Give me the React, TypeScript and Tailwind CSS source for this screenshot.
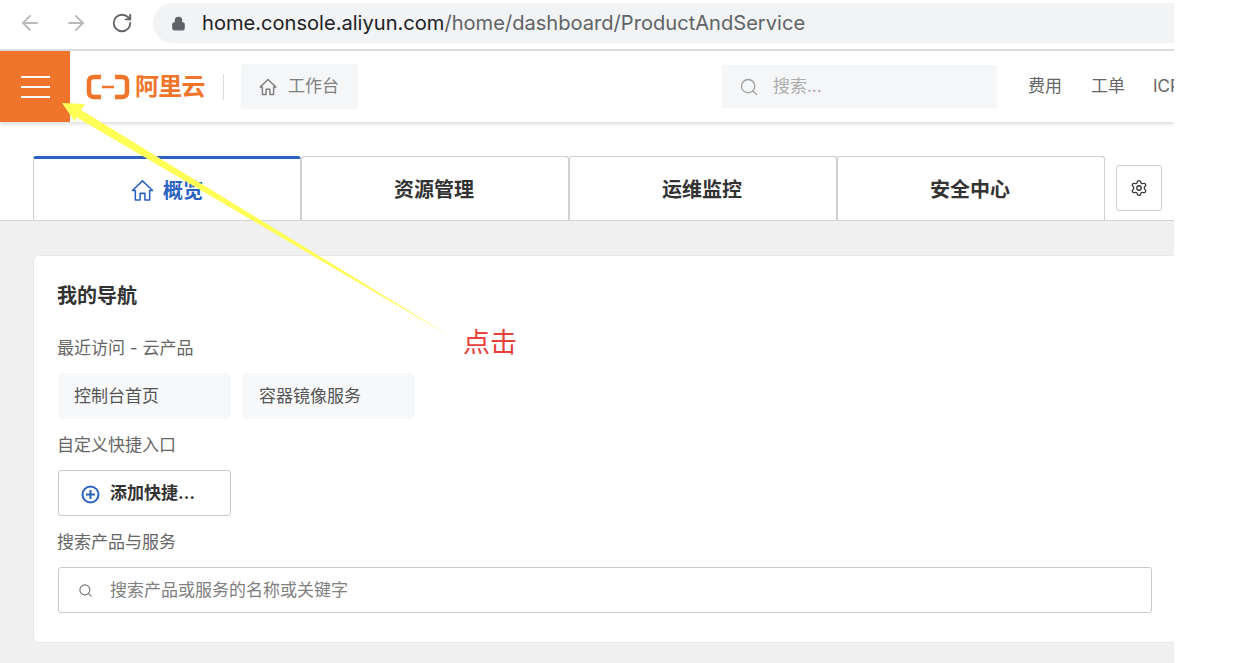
import { ArrowLeft, ArrowRight, RotateCw, Lock, Search, Settings } from 'lucide-react';

const cjk = "font-['Inter','Noto_Sans_CJK_SC',sans-serif]";

function Logo() {
  return (
    <svg className="shrink-0" width="44" height="26" viewBox="0 0 44 26" fill="none" stroke="#f0752b" strokeWidth="4.5">
      <path d="M15 3 H8 Q3 3 3 8 V18 Q3 23 8 23 H15" />
      <path d="M29 3 H36 Q41 3 41 8 V18 Q41 23 36 23 H29" />
      <path d="M16 13 H28" strokeWidth="2.5" />
    </svg>
  );
}

// Outlined house with eaves and a door, as used by the console
function HomeIcon({ size, width = 2 }: { size: number; width?: number }) {
  return (
    <svg className="shrink-0" width={size} height={size} viewBox="0 0 24 24" fill="none" stroke="currentColor" strokeWidth={width} strokeLinejoin="round">
      <path d="M1.5 12 L12 2 L22.5 12 H19.5 V22 H14.5 V15 H9.5 V22 H4.5 V12 Z" />
    </svg>
  );
}

function Arrow() {
  return (
    <svg className="absolute top-0 left-0 z-20 pointer-events-none" width="500" height="350">
      <polygon points="62,103 85,104 81,110 453,338 76,117 75,122" fill="#ffff55" />
    </svg>
  );
}

export default function App() {
  const tabs = ['资源管理', '运维监控', '安全中心'];

  return (
    <div className={`relative w-[1234px] h-[663px] bg-white overflow-hidden ${cjk}`}>
      <div className="w-[1174px] h-[663px] overflow-hidden flex flex-col bg-[#f0f0f0]">
        {/* Browser bar */}
        <div className="h-[51px] shrink-0 bg-white border-b-2 border-[#dadce0] flex items-start pt-[3px]">
          <div className="flex items-center h-10 pl-[18px] gap-[22px]">
            <ArrowLeft size={24} className="text-[#b9bbbd]" strokeWidth={1.8} />
            <ArrowRight size={24} className="text-[#b9bbbd]" strokeWidth={1.8} />
            <RotateCw size={22} className="ml-[1px] text-[#5f6368]" strokeWidth={2} />
          </div>
          <div className="ml-[20px] flex-1 h-10 bg-[#f1f3f4] rounded-l-[20px] flex items-center pl-[18px]">
            <Lock size={15} className="text-[#5f6368]" fill="#5f6368" />
            <span className="ml-[16px] text-[20.1px] text-[#202124] whitespace-nowrap">
              home.console.aliyun.com<span className="text-[#5f6368]">/home/dashboard/ProductAndService</span>
            </span>
          </div>
        </div>

        {/* Console header */}
        <div className="h-[71px] shrink-0 bg-white flex items-center shadow-[0_2px_4px_rgba(0,0,0,0.14)] relative z-10">
          <div className="w-[70px] shrink-0 h-full bg-[#ef742c] flex flex-col items-center justify-center gap-[8px]">
            <div className="w-[29px] h-[2px] bg-white" />
            <div className="w-[29px] h-[2px] bg-white" />
            <div className="w-[29px] h-[2px] bg-white" />
          </div>
          <div className="ml-[16px] shrink-0 flex items-center">
            <Logo />
            <span className="ml-[5px] text-[24px] font-bold text-[#f0752b] leading-none whitespace-nowrap tracking-[-0.7px]">阿里云</span>
          </div>
          <div className="ml-[18px] shrink-0 w-px h-[26px] bg-[#dcdcdc]" />
          <div className="ml-[17px] shrink-0 w-[117px] h-[45px] bg-[#f5f6f8] rounded-[3px] flex items-center pl-[18px] gap-[11px] text-[#808080]">
            <HomeIcon size={18} />
            <span className="text-[17px]">工作台</span>
          </div>
          <div className="ml-[364px] shrink-0 w-[275px] h-[43px] bg-[#f5f6f8] flex items-center pl-[17px] gap-[14px]">
            <Search size={20} className="text-[#a0a0a0]" strokeWidth={1.6} />
            <span className="text-[17px] text-[#adadad]">搜索...</span>
          </div>
          <span className="ml-[31px] shrink-0 text-[17px] text-[#666666] whitespace-nowrap">费用</span>
          <span className="ml-[29px] shrink-0 text-[17px] text-[#666666] whitespace-nowrap">工单</span>
          <span className="ml-[28px] shrink-0 text-[17px] text-[#666666] whitespace-nowrap">ICP</span>
        </div>

        {/* Tabs */}
        <div className="h-[99px] shrink-0 bg-white border-b border-[#d4d4d4] flex items-end pl-[33px]">
          <div className="w-[268px] h-[64px] shrink-0 pt-[2px] bg-white border-x border-[#cfcfd4] border-t-[3px] border-t-[#2b62c0] rounded-t-[3px] flex items-center justify-center gap-[9px] text-[#2b62c0] font-bold text-[20px]">
            <HomeIcon size={23} width={1.6} />
            概览
          </div>
          {tabs.map(tab => (
            <div
              key={tab}
              className="w-[268px] h-[64px] shrink-0 pt-[3px] pr-[2px] bg-white border-x border-t border-[#cfcfd4] rounded-t-[3px] flex items-center justify-center font-bold text-[20px] text-[#333333]"
            >
              {tab}
            </div>
          ))}
          <div className="ml-[11px] mb-[9px] shrink-0 w-[46px] h-[46px] border border-[#d0d0d4] rounded-[3px] flex items-center justify-center text-[#333333]">
            <Settings size={18} strokeWidth={1.7} />
          </div>
        </div>

        {/* My navigation card */}
        <div className="mt-[34px] ml-[33px] w-[1170px] h-[388px] shrink-0 bg-white rounded-[6px] border border-[#e8e8e8] pl-[24px] pt-[26px]">
          <div className="-ml-px text-[20px] font-bold text-[#333333] leading-[28px]">我的导航</div>
          <div className="-ml-px mt-[26px] text-[17px] text-[#666666] leading-[24px]">最近访问 - 云产品</div>
          <div className="mt-[13px] flex gap-[11px]">
            <div className="w-[173px] h-[46px] pt-[2px] bg-[#f7f8fa] rounded-[3px] flex items-center pl-[16px] text-[17px] text-[#555555]">控制台首页</div>
            <div className="w-[173px] h-[46px] pt-[2px] bg-[#f7f8fa] rounded-[3px] flex items-center pl-[17px] text-[17px] text-[#555555]">容器镜像服务</div>
          </div>
          <div className="-ml-px mt-[14px] text-[17px] text-[#666666] leading-[24px]">自定义快捷入口</div>
          <div className="mt-[13px] w-[173px] h-[46px] pt-[2px] border border-[#c9c9cd] rounded-[3px] flex items-center pl-[22px] gap-[10px]">
            <svg className="shrink-0" width="19" height="19" viewBox="0 0 19 19" fill="none" stroke="#2b62c0" strokeWidth="2">
              <circle cx="9.5" cy="9.5" r="8" />
              <path d="M9.5 5 V14 M5 9.5 H14" />
            </svg>
            <span className="text-[17px] font-bold text-[#333333]">添加快捷…</span>
          </div>
          <div className="-ml-px mt-[14px] text-[17px] text-[#666666] leading-[24px]">搜索产品与服务</div>
          <div className="mt-[13px] w-[1094px] h-[46px] pt-px border border-[#c9c9cd] rounded-[3px] flex items-center pl-[19px] gap-[17px]">
            <Search size={15} className="text-[#777777]" strokeWidth={1.8} />
            <span className="text-[17px] text-[#808080]">搜索产品或服务的名称或关键字</span>
          </div>
        </div>
      </div>

      {/* Annotation drawn on top of the screenshot */}
      <Arrow />
      <span className="absolute left-[463px] top-[324px] text-[27px] leading-[38px] text-[#e8403a]">点击</span>
    </div>
  );
}
